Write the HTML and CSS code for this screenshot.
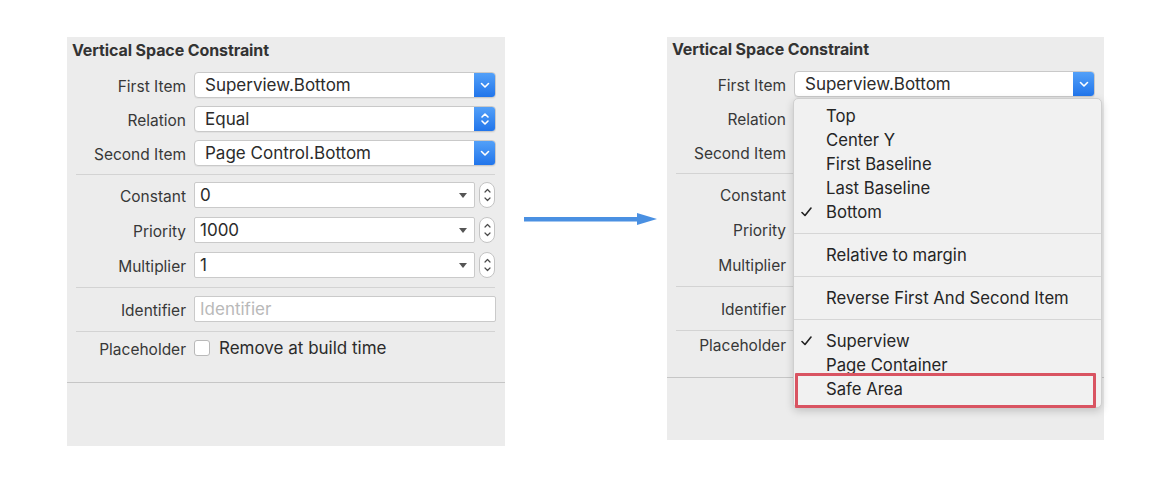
FILE: index.html
```html
<!DOCTYPE html>
<html lang="en">
<head>
<meta charset="utf-8">
<title>Vertical Space Constraint</title>
<link rel="stylesheet" href="styles.css">
</head>
<body>
<main class="scene">
  <section class="panel panel-left">
    <h2 class="title">Vertical Space Constraint</h2>
    <div class="group group-items">
      <div class="row"><span class="lbl">First Item</span>
        <div class="popup"><span class="val">Superview.Bottom</span>
          <span class="btn"><svg width="10" height="7" viewBox="0 0 10 7"><path d="M1.5 1.5 L5 5 L8.5 1.5" fill="none" stroke="#fff" stroke-width="1.6" stroke-linecap="round" stroke-linejoin="round"/></svg></span></div></div>
      <div class="row"><span class="lbl">Relation</span>
        <div class="popup"><span class="val">Equal</span>
          <span class="btn"><svg width="10" height="16" viewBox="0 0 10 16"><path d="M2 6 L5 3 L8 6 M2 10 L5 13 L8 10" fill="none" stroke="#fff" stroke-width="1.6" stroke-linecap="round" stroke-linejoin="round"/></svg></span></div></div>
      <div class="row"><span class="lbl">Second Item</span>
        <div class="popup"><span class="val">Page Control.Bottom</span>
          <span class="btn"><svg width="10" height="7" viewBox="0 0 10 7"><path d="M1.5 1.5 L5 5 L8.5 1.5" fill="none" stroke="#fff" stroke-width="1.6" stroke-linecap="round" stroke-linejoin="round"/></svg></span></div></div>
    </div>
    <hr class="sep">
    <div class="group group-values">
      <div class="row"><span class="lbl">Constant</span>
        <div class="combo-wrap"><div class="combo"><span class="val val-plain">0</span><span class="tri"></span></div>
          <span class="stepper"><svg width="9" height="20" viewBox="0 0 9 20"><path d="M2 7 L4.5 4.5 L7 7 M2 13 L4.5 15.5 L7 13" fill="none" stroke="#4a4a4a" stroke-width="1.2" stroke-linecap="round" stroke-linejoin="round"/></svg></span></div></div>
      <div class="row"><span class="lbl">Priority</span>
        <div class="combo-wrap"><div class="combo"><span class="val val-plain">1000</span><span class="tri"></span></div>
          <span class="stepper"><svg width="9" height="20" viewBox="0 0 9 20"><path d="M2 7 L4.5 4.5 L7 7 M2 13 L4.5 15.5 L7 13" fill="none" stroke="#4a4a4a" stroke-width="1.2" stroke-linecap="round" stroke-linejoin="round"/></svg></span></div></div>
      <div class="row"><span class="lbl">Multiplier</span>
        <div class="combo-wrap"><div class="combo"><span class="val val-plain">1</span><span class="tri"></span></div>
          <span class="stepper"><svg width="9" height="20" viewBox="0 0 9 20"><path d="M2 7 L4.5 4.5 L7 7 M2 13 L4.5 15.5 L7 13" fill="none" stroke="#4a4a4a" stroke-width="1.2" stroke-linecap="round" stroke-linejoin="round"/></svg></span></div></div>
    </div>
    <hr class="sep sep-b">
    <div class="row row-id"><span class="lbl">Identifier</span>
      <div class="textfield"><span class="val val-plain placeholder">Identifier</span></div></div>
    <hr class="sep sep-c">
    <div class="row row-check"><span class="lbl">Placeholder</span>
      <div class="check-line"><span class="checkbox"></span><span class="check-text">Remove at build time</span></div></div>
    <hr class="sep-full">
  </section>

  <div class="arrow">
    <svg width="133" height="12" viewBox="0 0 133 12"><rect x="0" y="4" width="115" height="4.5" fill="#4a90e2"/><path d="M113 0 L133 6 L113 12 Z" fill="#4a90e2"/></svg>
  </div>

  <section class="panel panel-right">
    <h2 class="title">Vertical Space Constraint</h2>
    <div class="group group-items">
      <div class="row"><span class="lbl">First Item</span>
        <div class="popup"><span class="val">Superview.Bottom</span>
          <span class="btn"><svg width="10" height="7" viewBox="0 0 10 7"><path d="M1.5 1.5 L5 5 L8.5 1.5" fill="none" stroke="#fff" stroke-width="1.6" stroke-linecap="round" stroke-linejoin="round"/></svg></span></div></div>
      <div class="row"><span class="lbl">Relation</span><div class="popup"></div></div>
      <div class="row"><span class="lbl">Second Item</span><div class="popup"></div></div>
    </div>
    <hr class="sep">
    <div class="group group-values">
      <div class="row"><span class="lbl">Constant</span><div class="combo-wrap"><div class="combo"></div></div></div>
      <div class="row"><span class="lbl">Priority</span><div class="combo-wrap"><div class="combo"></div></div></div>
      <div class="row"><span class="lbl">Multiplier</span><div class="combo-wrap"><div class="combo"></div></div></div>
    </div>
    <hr class="sep sep-b">
    <div class="row row-id"><span class="lbl">Identifier</span><div class="textfield"></div></div>
    <hr class="sep sep-c sep-c-right">
    <div class="row row-check"><span class="lbl">Placeholder</span>
      <div class="check-line"><span class="checkbox"></span></div></div>
    <hr class="sep-full sep-full-right">

    <div class="menu">
      <ul class="menu-group">
        <li class="item">Top</li>
        <li class="item">Center Y</li>
        <li class="item">First Baseline</li>
        <li class="item">Last Baseline</li>
        <li class="item checked"><svg class="tick" width="11" height="10" viewBox="0 0 11 10"><path d="M1 5.5 L4 8.5 L10 1" fill="none" stroke="#222" stroke-width="1.6" stroke-linecap="round" stroke-linejoin="round"/></svg>Bottom</li>
      </ul>
      <div class="menu-sep"></div>
      <ul class="menu-group">
        <li class="item">Relative to margin</li>
      </ul>
      <div class="menu-sep"></div>
      <ul class="menu-group">
        <li class="item">Reverse First And Second Item</li>
      </ul>
      <div class="menu-sep"></div>
      <ul class="menu-group">
        <li class="item checked"><svg class="tick" width="11" height="10" viewBox="0 0 11 10"><path d="M1 5.5 L4 8.5 L10 1" fill="none" stroke="#222" stroke-width="1.6" stroke-linecap="round" stroke-linejoin="round"/></svg>Superview</li>
        <li class="item">Page Container</li>
        <li class="item">Safe Area</li>
      </ul>
      <div class="highlight"></div>
    </div>
  </section>
</main>
</body>
</html>
```

FILE: styles.css
```css
* { box-sizing: border-box; }

html, body {
  margin: 0;
  padding: 0;
  background: #ffffff;
}

body {
  font-family: Inter, "Helvetica Neue", "Liberation Sans", Arial, sans-serif;
  color: #333333;
}

.scene {
  display: flex;
  align-items: flex-start;
  padding: 37px 0 0 67px;
}

.panel {
  position: relative;
  background: #ececec;
  display: flex;
  flex-direction: column;
  padding: 4px 9px 0 0;
}

.panel-left {
  width: 438px;
  height: 409px;
}

.panel-right {
  width: 437px;
  height: 403px;
  padding-top: 3px;
}

.title {
  margin: 0 0 13px 5px;
  font-size: 16px;
  line-height: 18px;
  font-weight: 700;
  color: #333333;
  letter-spacing: -0.1px;
}

.group {
  display: flex;
  flex-direction: column;
}

.group-items { gap: 8px; }
.group-values { gap: 9px; }

.row {
  display: grid;
  grid-template-columns: 119px 1fr;
  column-gap: 8px;
  align-items: center;
  height: 26px;
}

.lbl {
  text-align: right;
  font-size: 15.5px;
  color: #383838;
  white-space: nowrap;
  padding-top: 2px;
}

.val {
  font-size: 17px;
  color: #2b2b2b;
  padding-left: 10px;
  white-space: nowrap;
  flex: 1;
}

.val-plain { padding-left: 5px; }

.placeholder { color: #b9b9b9; }

.popup {
  display: flex;
  align-items: center;
  height: 26px;
  background: #ffffff;
  border: 1px solid #c9c9c9;
  border-radius: 4px;
  box-shadow: 0 1px 0 rgba(0,0,0,0.04);
  overflow: hidden;
}

.btn {
  width: 22px;
  height: 26px;
  margin: -1px -1px -1px 0;
  display: flex;
  align-items: center;
  justify-content: center;
  background: linear-gradient(#55a2f9, #1f73ea);
  border-radius: 0 4px 4px 0;
}

.combo-wrap {
  display: flex;
  align-items: center;
  gap: 4px;
  margin-right: 1px;
}

.combo {
  flex: 1;
  display: flex;
  align-items: center;
  height: 26px;
  background: #ffffff;
  border: 1px solid #cacaca;
  border-radius: 2px;
  padding-right: 7px;
}

.tri {
  width: 0;
  height: 0;
  border-left: 4.5px solid transparent;
  border-right: 4.5px solid transparent;
  border-top: 5px solid #555555;
}

.stepper {
  width: 16px;
  height: 26px;
  display: flex;
  align-items: center;
  justify-content: center;
  background: #ffffff;
  border: 1px solid #c4c4c4;
  border-radius: 8px;
}

.sep {
  height: 1px;
  border: 0;
  margin: 8px 1px 7px 9px;
  background: #d3d3d3;
}

.sep-b { margin: 9px 1px 8px 9px; }
.sep-c { margin: 9px 1px 3px 9px; }
.sep-c-right { margin-bottom: 0; }

.textfield {
  display: flex;
  align-items: center;
  height: 26px;
  background: #ffffff;
  border: 1px solid #cacaca;
  border-radius: 2px;
}

.check-line {
  display: flex;
  align-items: center;
  gap: 9px;
}

.checkbox {
  width: 16px;
  height: 16px;
  background: #ffffff;
  border: 1px solid #b9b9b9;
  border-radius: 3px;
}

.check-text {
  font-size: 17px;
  color: #2b2b2b;
}

.sep-full {
  height: 1px;
  border: 0;
  margin: 21px -9px 0 0;
  background: #c6c6c6;
}

.sep-full-right { margin-top: 20px; }

.arrow {
  margin: 176px 10px 0 19px;
  display: flex;
}

/* dropdown menu overlay */
.menu {
  position: absolute;
  left: 126px;
  top: 61px;
  width: 309px;
  height: 310px;
  background: #f1f1f1;
  border: 1px solid #cfcfcf;
  border-radius: 5px;
  box-shadow: 0 3px 8px rgba(0,0,0,0.18);
  padding: 5px 0 0 0;
}

.menu-group {
  list-style: none;
  margin: 0;
  padding: 0;
}

.item {
  position: relative;
  height: 24px;
  line-height: 24px;
  padding-left: 32px;
  font-size: 16.7px;
  color: #252525;
  white-space: nowrap;
}

.tick {
  position: absolute;
  left: 7px;
  top: 7px;
}

.menu-sep {
  height: 1px;
  background: #d6d6d6;
  margin: 9px 0 9px 0;
}

.highlight {
  position: absolute;
  left: 1px;
  top: 274px;
  width: 301px;
  height: 35px;
  border: 3px solid #d95462;
  border-radius: 1px;
}
```
